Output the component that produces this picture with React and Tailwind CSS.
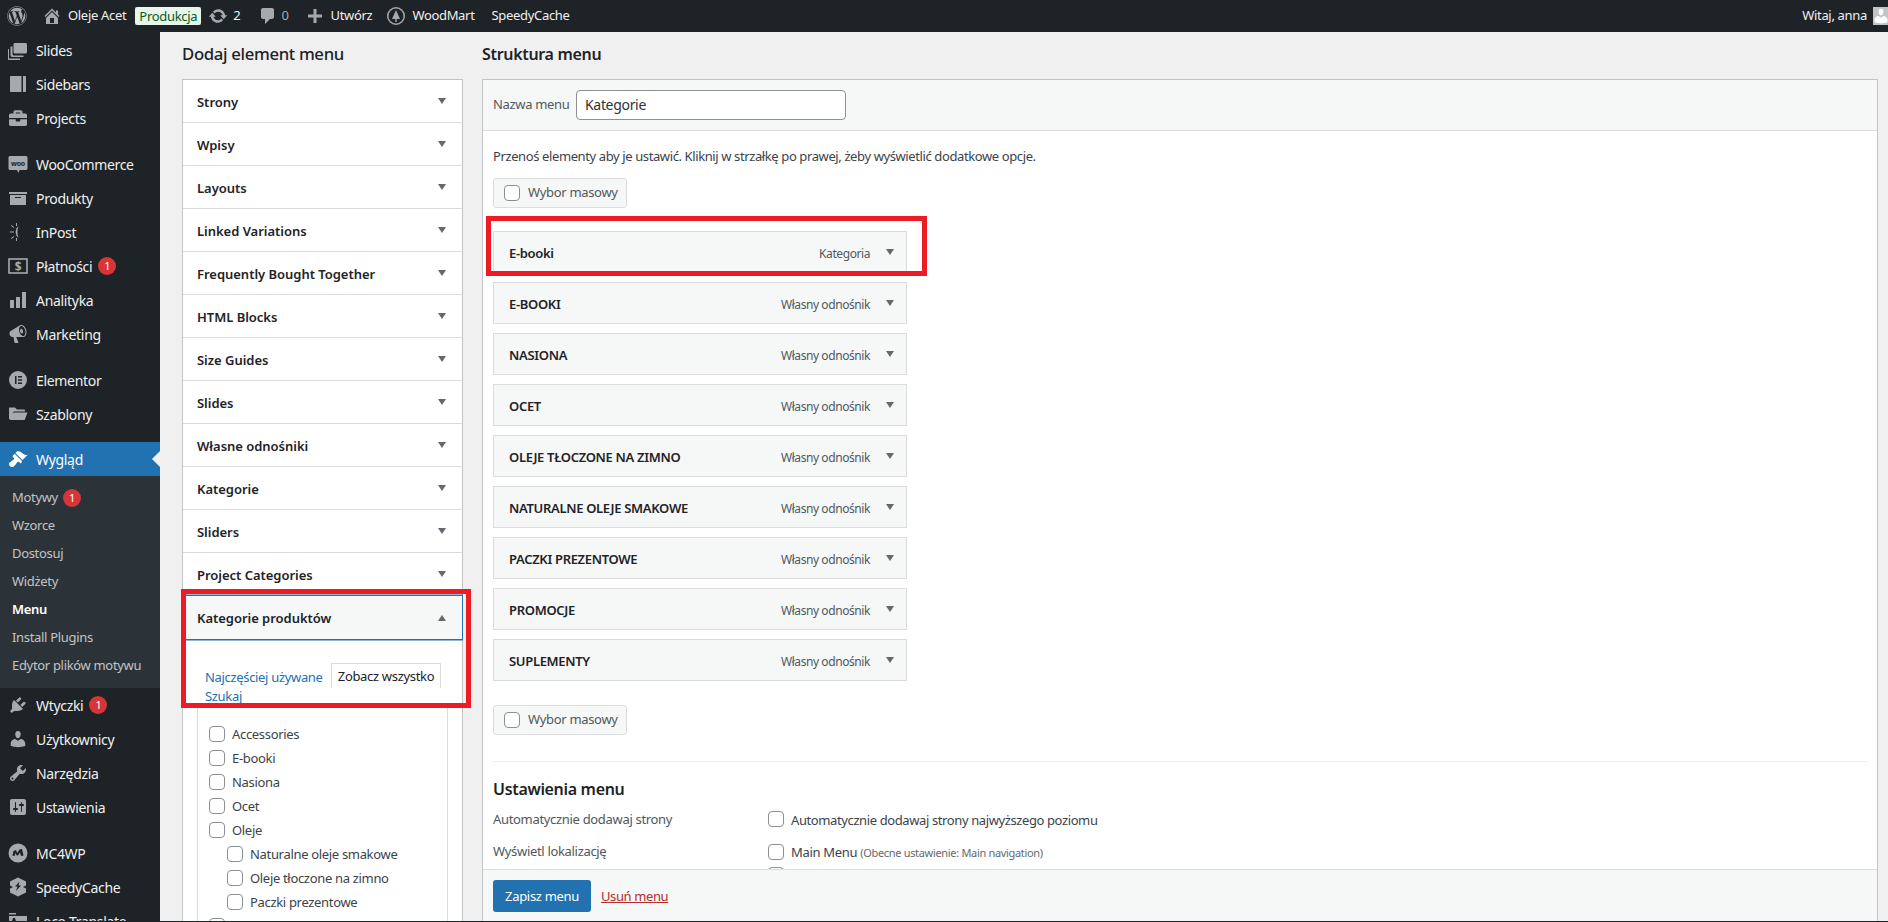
import React from "react";
import { FaWordpress, FaBriefcase } from "react-icons/fa";

const Ic = ({ d, size = 20, className = "", color = "#a7aaad" }) => (
  <svg width={size} height={size} viewBox="0 0 20 20" className={`shrink-0 ${className}`} fill={color}>
    <path d={d} />
  </svg>
);

const P = {
  home: "M16 8.5l1.53 1.53-1.06 1.06L10 4.62l-6.47 6.47-1.06-1.06L10 2.5l4 4v-2h2v4zm-6-2.46l6 5.99V18H4v-5.97zM12 17v-5H8v5h4z",
  update: "M10.2 3.28c3.53 0 6.43 2.61 6.92 6h2.08l-3.5 4-3.5-4h2.32c-.45-1.97-2.21-3.45-4.32-3.45-1.45 0-2.73.71-3.54 1.78L4.95 5.66C6.23 4.2 8.11 3.28 10.2 3.28zm-.4 13.44c-3.52 0-6.43-2.61-6.92-6H.8l3.5-4c1.17 1.33 2.33 2.67 3.5 4H5.48c.45 1.97 2.21 3.45 4.32 3.45 1.45 0 2.73-.71 3.54-1.78l1.71 1.95c-1.28 1.46-3.15 2.38-5.25 2.38z",
  comment: "M5 2h9c1.1 0 2 .9 2 2v7c0 1.1-.9 2-2 2h-2l-5 5v-5H5c-1.1 0-2-.9-2-2V4c0-1.1.9-2 2-2z",
  plus: "M8.5 3h3v5.5H17v3h-5.5V17h-3v-5.5H3v-3h5.5z",
  slides: "M7 3h10.5c.8 0 1.5.7 1.5 1.5V12c0 .8-.7 1.5-1.5 1.5H7c-.8 0-1.5-.7-1.5-1.5V4.500C5.500 3.700 6.200 3 7 3zM3 6.500h1.500V14c0 .8.700 1.500 1.500 1.500h9.500V17H4.500C3.200 17 2.500 16.300 2.500 15V7c0-.3.200-.5.500-.5zM1 9v9.500h11V20H1c-.6 0-1-.4-1-1V9z",
  sidebars: "M3 2h10.500v16H3c-.6 0-1-.4-1-1V3c0-.6.400-1 1-1zm12 0h2c.6 0 1 .4 1 1v14c0 .6-.4 1-1 1h-2z",
  archive: "M19 4v2H1V4h18zM2 7h16v10H2V7zm11 3V9H7v1h6z",
  bar: "M18 18V2h-4v16h4zm-6 0V7H8v11h4zm-6 0v-8H2v8h4z",
  mega: "M18.15 5.94c.46 1.62.38 3.22-.02 4.48-.42 1.28-1.26 2.18-2.3 2.48-.16.06-.26.06-.4.06-.06.02-.12.02-.18.02-.06.02-.14.02-.22.02h-6.8l2.22 5.5c.02.14-.06.26-.14.34-.08.1-.24.16-.34.16H6.95c-.1 0-.26-.06-.34-.16-.08-.08-.16-.2-.14-.34l-1-5.5H4.25l-.02-.02c-.5.06-1.08-.18-1.54-.62s-.88-1.08-1.06-1.88c-.24-.8-.2-1.56-.02-2.2.18-.62.58-1.08 1.06-1.3l.02-.02 9-5.4c.1-.06.18-.1.24-.16.06-.04.14-.08.24-.12.16-.08.28-.12.5-.18 1.04-.3 2.24.1 3.22.98.98.9 1.82 2.24 2.26 3.86zm-2.58 5.98h-.02c.4-.1.74-.34 1.04-.7.58-.7.86-1.76.86-3.04-.02-.64-.1-1.3-.28-1.98-.34-1.36-1.02-2.5-1.78-3.24s-1.68-1.1-2.46-.88c-.82.22-1.4.96-1.7 2-.32 1.04-.28 2.36.06 3.72.38 1.36 1 2.5 1.8 3.24.78.74 1.62 1.1 2.48.88zm-2.54-7.08c.22-.04.42-.02.62.04.38.16.76.48 1.02 1s.42 1.2.42 1.78c0 .3-.04.56-.12.8-.18.48-.44.84-.86.94-.34.1-.8-.06-1.14-.4-.34-.32-.62-.8-.8-1.36-.16-.56-.18-1.14-.06-1.6.14-.46.4-.8.8-.92.02-.02.08-.02.12-.04z",
  folder: "M1 3.500h6l2 2h7c.6 0 1 .4 1 1v1H6.500c-.6 0-1 .3-1.200.8L2.800 14.500 1 15.500V3.500zm5.800 5H19.500L16.700 16H1.800L4.900 9.200C5.200 8.700 6.200 8.500 6.800 8.500z",
  brush: "M14.48 11.06L7.41 3.99l1.5-1.5c.5-.56 2.3-.47 3.51.32 1.21.8 1.43 1.28 2.91 2.1 1.18.64 2.45 1.26 4.45.85zm-.71.71L6.7 4.7 4.93 6.47c-.39.39-.39 1.02 0 1.41l1.06 1.06c.39.39.39 1.03 0 1.42-.6.6-1.43 1.11-2.21 1.69-.35.26-.7.53-1.01.84C1.43 13.23 1 14.12 1 15c0 1.85 1.57 3 3 3 .88 0 1.77-.43 3.01-1.78.31-.31.58-.66.84-1.01.58-.78 1.09-1.61 1.69-2.21.39-.39 1.03-.39 1.42 0l1.06 1.06c.39.39 1.02.39 1.41 0z",
  plug: "M13.11 4.36L9.87 7.6 8 5.73l3.24-3.24c.35-.34 1.05-.2 1.56.32.52.51.66 1.21.31 1.55zm-8 1.77l.91-1.12 9.01 9.01-1.19.84c-.71.71-2.63 1.16-3.82 1.16H6.14L4.9 17.26c-.59.59-1.54.59-2.12 0-.59-.58-.59-1.53 0-2.12l1.24-1.24v-3.88c0-1.13.4-3.19 1.09-3.89zm7.26 3.97l3.24-3.24c.34-.35 1.04-.21 1.55.31.52.51.66 1.21.31 1.55l-3.24 3.25z",
  users: "M10 9.25c-2.27 0-2.73-3.44-2.73-3.44C7 4.02 7.82 2 9.97 2c2.16 0 2.98 2.02 2.71 3.81 0 0-.41 3.44-2.68 3.44zm0 2.57L12.72 10c2.39 0 4.52 2.33 4.52 4.53v2.49s-3.65 1.13-7.24 1.13c-3.65 0-7.24-1.13-7.24-1.13v-2.49c0-2.25 1.94-4.48 4.47-4.48z",
  tools: "M16.68 9.77c-1.34 1.34-3.3 1.67-4.95.99l-5.41 6.52c-.99.99-2.59.99-3.58 0s-.99-2.59 0-3.57l6.52-5.42c-.68-1.65-.35-3.61.99-4.95 1.28-1.28 3.12-1.62 4.72-1.06l-2.89 2.89 2.82 2.82 2.86-2.87c.53 1.58.18 3.39-1.08 4.65zM3.81 16.21c.4.39 1.04.39 1.43 0 .4-.4.4-1.04 0-1.43-.39-.4-1.03-.4-1.43 0-.39.39-.39 1.03 0 1.43z",
  settings: "M18 16V4c0-1.1-.9-2-2-2H4c-1.1 0-2 .9-2 2v12c0 1.1.9 2 2 2h12c1.1 0 2-.9 2-2zM8 11h1c.55 0 1 .45 1 1s-.45 1-1 1H8v1.5c0 .28-.22.5-.5.5s-.5-.22-.5-.5V13H6c-.55 0-1-.45-1-1s.45-1 1-1h1V5.500c0-.28.22-.5.5-.5s.5.22.5.5V11zm5-2h-1c-.55 0-1-.45-1-1s.45-1 1-1h1V5.500c0-.28.22-.5.5-.5s.5.22.5.5V7h1c.55 0 1 .45 1 1s-.45 1-1 1h-1v5.500c0 .28-.22.5-.5.5s-.5-.22-.5-.5V9z",
  elementor: "M10 1a9 9 0 1 0 0 18 9 9 0 0 0 0-18zM7 6h1.500v8H7zm3 0h4v1.500h-4zm0 3.200h4v1.500h-4zm0 3.300h4V14h-4z",
  mc: "M10 .5a9.500 9.500 0 1 0 0 19 9.500 9.500 0 0 0 0-19zM4.500 13l1-5 2.500-1 1.200 3 2.300-3.500 2.500-.5 1.500 6.500-2.500.5-1-3.500-2 3-1.500-.2-1.200-2.300-.500 2.700z",
  speedy: "M10 .5l8 4v4l-3 1.500 3 1.500v4l-8 4-8-4v-4l3-1.500-3-1.500v-4zm1.500 4L7 9.500h2.500L8 14l5-5.500h-2.500z",
  sun: "M10.500 4c-1.800 1.400-2.800 3.500-2.800 6s1 4.600 2.800 6c-.700-1.900-1.100-3.900-1.100-6s.4-4.100 1.100-6zM6 9.500H2v1h4zM6.300 5.300L3.500 2.900l-.6.700 2.800 2.400zM6.300 14.700l-.6-.7-2.800 2.400.6.700zM8 1h1v3H8zM8 16h1v3H8z",
  wood: "M10 1a9 9 0 1 0 0 18 9 9 0 0 0 0-18zm0 1.500a7.500 7.500 0 1 1 0 15 7.500 7.500 0 0 1 0-15zM10 4l4 9h-3.300v3H9.300v-3H6z",
  loco: "M1 2h7v1.500H1zM1 5h18v13H1zm4 2l-2.500 8h1.800l.5-1.800h2.400l.5 1.800h1.800L7 7z",
};

const Arrow = ({ up, className = "" }) => (
  <svg width="8" height="6" viewBox="0 0 8 6" className={`shrink-0 ${className}`} fill="#646970">
    <path d={up ? "M4 0l4 6H0z" : "M0 0h8L4 6z"} />
  </svg>
);

const Check = ({ className = "" }) => (
  <input type="checkbox" readOnly className={`appearance-none w-4 h-4 shrink-0 bg-white border border-[#8c8f94] rounded-[4px] ${className}`} />
);

const Badge = ({ className = "" }) => (
  <span className={`w-[18px] h-[18px] rounded-full bg-[#d63638] text-white text-[11px] leading-[18px] text-center ${className}`}>1</span>
);

const WooIcon = () => (
  <svg width="20" height="20" viewBox="0 0 20 20" className="shrink-0">
    <path d="M2 2h16c.8 0 1.500.7 1.500 1.500v11c0 .8-.7 1.500-1.500 1.500h-6.500l-1 3-1.500-3H2c-.8 0-1.500-.7-1.500-1.500v-11C.5 2.700 1.200 2 2 2z" fill="#a7aaad" />
    <text x="10" y="11.500" textAnchor="middle" fontSize="7" fontWeight="700" fill="#1d2327">woo</text>
  </svg>
);

const PayIcon = () => (
  <svg width="20" height="20" viewBox="0 0 20 20" className="shrink-0">
    <rect x="1" y="3" width="18" height="14" fill="none" stroke="#a7aaad" strokeWidth="1.600" />
    <text x="10" y="14.500" textAnchor="middle" fontSize="12" fontWeight="700" fill="#a7aaad">$</text>
  </svg>
);

const Item = ({ icon, label, badge, active }) => (
  <div className={`relative h-[34px] shrink-0 flex items-center pl-2 gap-2 text-[14px] ${active ? "bg-[#2271b1] text-white" : "text-[#f0f0f1]"}`}>
    {icon}
    <span className="whitespace-nowrap">{label}</span>
    {badge && <Badge className="-ml-0.5" />}
    {active && <span className="absolute right-0 top-[9px] border-y-8 border-r-8 border-y-transparent border-r-[#f0f0f1]" />}
  </div>
);

const SubItem = ({ label, badge, current }) => (
  <div className={`h-7 flex items-center pl-3 gap-[5px] text-[13px] ${current ? "text-white font-semibold" : "text-[#c3c4c7]"}`}>
    <span className="whitespace-nowrap">{label}</span>
    {badge && <Badge />}
  </div>
);

const Sidebar = () => (
  <aside className="w-40 shrink-0 bg-[#1d2327] overflow-hidden flex flex-col pt-px">
    <Item icon={<Ic d={P.slides} />} label="Slides" />
    <Item icon={<Ic d={P.sidebars} />} label="Sidebars" />
    <Item icon={<FaBriefcase size={18} color="#a7aaad" className="shrink-0 mx-px" />} label="Projects" />
    <div className="h-3 shrink-0" />
    <Item icon={<WooIcon />} label="WooCommerce" />
    <Item icon={<Ic d={P.archive} />} label="Produkty" />
    <Item icon={<Ic d={P.sun} />} label="InPost" />
    <Item icon={<PayIcon />} label="Płatności" badge />
    <Item icon={<Ic d={P.bar} />} label="Analityka" />
    <Item icon={<Ic d={P.mega} />} label="Marketing" />
    <div className="h-3 shrink-0" />
    <Item icon={<Ic d={P.elementor} />} label="Elementor" />
    <Item icon={<Ic d={P.folder} />} label="Szablony" />
    <div className="h-[11px] shrink-0" />
    <Item icon={<Ic d={P.brush} color="#ffffff" />} label="Wygląd" active />
    <div className="bg-[#2c3338] py-2 shrink-0">
      <SubItem label="Motywy" badge />
      <SubItem label="Wzorce" />
      <SubItem label="Dostosuj" />
      <SubItem label="Widżety" />
      <SubItem label="Menu" current />
      <SubItem label="Install Plugins" />
      <SubItem label="Edytor plików motywu" />
    </div>
    <Item icon={<Ic d={P.plug} />} label="Wtyczki" badge />
    <Item icon={<Ic d={P.users} />} label="Użytkownicy" />
    <Item icon={<Ic d={P.tools} />} label="Narzędzia" />
    <Item icon={<Ic d={P.settings} />} label="Ustawienia" />
    <div className="h-3 shrink-0" />
    <Item icon={<Ic d={P.mc} />} label="MC4WP" />
    <Item icon={<Ic d={P.speedy} />} label="SpeedyCache" />
    <Item icon={<Ic d={P.loco} />} label="Loco Translate" />
  </aside>
);

const TopBar = () => (
  <header className="h-8 shrink-0 bg-[#1d2327] flex items-center text-[13px] text-[#f0f0f1] whitespace-nowrap">
    <FaWordpress size={20} color="#a7aaad" className="ml-[7px] shrink-0" />
    <Ic d={P.home} size={20} className="ml-[15px]" />
    <span className="ml-[6px]">Oleje Acet</span>
    <span className="ml-[9px] w-[66px] text-center h-[18px] leading-[18px] bg-[#e8f5e9] text-[#0c5a1f] rounded-[2px]">Produkcja</span>
    <Ic d={P.update} size={20} className="ml-[7px]" />
    <span className="ml-[5px]">2</span>
    <Ic d={P.comment} size={20} className="ml-[18px]" />
    <span className="ml-[3px] text-[#a7aaad]">0</span>
    <Ic d={P.plus} size={20} className="ml-[16px]" />
    <span className="ml-[6px]">Utwórz</span>
    <Ic d={P.wood} size={20} className="ml-[14px]" />
    <span className="ml-[6px]">WoodMart</span>
    <span className="ml-[17px]">SpeedyCache</span>
    <span className="ml-auto mr-[6px]">Witaj, anna</span>
    <span className="w-[15px] h-[18px] bg-[#c3c4c7] overflow-hidden shrink-0 flex items-start">
      <Ic d={P.users} size={18} color="#ffffff" className="-ml-px" />
    </span>
  </header>
);

const accordion = [
  "Strony", "Wpisy", "Layouts", "Linked Variations", "Frequently Bought Together", "HTML Blocks",
  "Size Guides", "Slides", "Własne odnośniki", "Kategorie", "Sliders", "Project Categories",
];

const cats = [
  ["Accessories", 0], ["E-booki", 0], ["Nasiona", 0], ["Ocet", 0], ["Oleje", 0],
  ["Naturalne oleje smakowe", 1], ["Oleje tłoczone na zimno", 1], ["Paczki prezentowe", 1], ["Suplementy", 0],
];

const LeftColumn = () => (
  <section className="w-[281px] shrink-0 ml-[22px] flex flex-col overflow-hidden">
    <h2 className="mt-2.5 h-6 leading-6 text-[16.7px] font-medium text-[#1d2327] whitespace-nowrap">Dodaj element menu</h2>
    <div className="mt-[13px] bg-white border border-[#c3c4c7] border-b-0">
      {accordion.map((t) => (
        <div key={t} className="h-[43px] border-b border-[#dcdcde] flex items-center justify-between pl-[14px] pr-4 text-[13px] font-semibold text-[#1d2327] tracking-[-0.002em]">
          <span className="pt-[3px]">{t}</span>
          <Arrow />
        </div>
      ))}
      <div className="h-[43px] bg-[#f6f7f7] ring-[1.5px] ring-[#2271b1] flex items-center justify-between pl-[14px] pr-4 text-[13px] font-semibold text-[#1d2327] tracking-[-0.002em]">
        <span className="pt-[3px]">Kategorie produktów</span>
        <Arrow up />
      </div>
      <div className="pt-6 px-[14px]">
        <div className="pl-2 flex flex-wrap items-end w-[252px] text-[13px] text-[#2271b1]">
          <span className="w-[126px] h-[25px] leading-[29px] whitespace-nowrap tracking-[-0.025em]">Najczęściej używane</span>
          <span className="w-[110px] h-[25px] leading-[25px] text-center border border-b-0 border-[#dcdcde] text-[#1d2327] whitespace-nowrap">Zobacz wszystko</span>
          <span className="w-full h-[17px] leading-[17px]">Szukaj</span>
        </div>
        <div className="border border-[#dcdcde] px-[11px] pt-[16px] h-[300px]">
          {cats.map(([t, n]) => (
            <div key={t} className={`h-6 flex items-center gap-[7px] text-[13px] text-[#3c434a] ${n ? "pl-[18px]" : ""}`}>
              <Check />
              <span className="pt-[2px] whitespace-nowrap">{t}</span>
            </div>
          ))}
        </div>
      </div>
    </div>
  </section>
);

const items = [
  ["E-booki", "Kategoria"], ["E-BOOKI", "Własny odnośnik"], ["NASIONA", "Własny odnośnik"], ["OCET", "Własny odnośnik"],
  ["OLEJE TŁOCZONE NA ZIMNO", "Własny odnośnik"], ["NATURALNE OLEJE SMAKOWE", "Własny odnośnik"],
  ["PACZKI PREZENTOWE", "Własny odnośnik"], ["PROMOCJE", "Własny odnośnik"], ["SUPLEMENTY", "Własny odnośnik"],
];

const Bulk = ({ className = "" }) => (
  <div className={`w-[134px] h-[30px] flex items-center gap-2 pl-[10px] bg-[#f6f7f7] border border-[#dcdcde] rounded-[3px] text-[13px] text-[#50575e] ${className}`}>
    <Check />
    <span className="whitespace-nowrap">Wybor masowy</span>
  </div>
);

const RightColumn = () => (
  <section className="w-[1396px] shrink-0 ml-[19px] flex flex-col">
    <h2 className="mt-2.5 h-6 leading-6 text-[16px] font-semibold text-[#1d2327] whitespace-nowrap">Struktura menu</h2>
    <div className="mt-[13px] flex-1 min-h-0 flex flex-col bg-white border border-[#c3c4c7] border-b-0">
      <div className="h-[51px] shrink-0 bg-[#f6f7f7] border-b border-[#dcdcde] flex items-center pl-[10px] text-[13px] text-[#50575e]">
        <span className="w-[83px] whitespace-nowrap">Nazwa menu</span>
        <div className="w-[270px] h-[30px] bg-white border border-[#8c8f94] rounded-[4px] pl-2 leading-[28px] text-[14px] text-[#2c3338]">Kategorie</div>
      </div>
      <div className="flex-1 min-h-0 overflow-hidden pl-[10px]">
        <p className="mt-[15px] h-5 leading-5 text-[13px] text-[#3c434a] whitespace-nowrap tracking-[-0.03em]">Przenoś elementy aby je ustawić. Kliknij w strzałkę po prawej, żeby wyświetlić dodatkowe opcje.</p>
        <Bulk className="mt-3" />
        <div className="mt-[23px] flex flex-col gap-[9px] w-[414px]">
          {items.map(([t, k]) => (
            <div key={t} className="h-[42px] bg-[#f6f7f7] border border-[#dcdcde] flex items-center pl-[15px] pr-3 text-[13px]">
              <span className="pt-[3px] font-semibold text-[#1d2327] whitespace-nowrap">{t}</span>
              <span className="pt-[3px] ml-auto mr-4 text-[12px] text-[#50575e] whitespace-nowrap tracking-[-0.035em]">{k}</span>
              <Arrow />
            </div>
          ))}
        </div>
        <Bulk className="mt-6" />
        <div className="mt-[26px] mr-[10px] h-px bg-[#f0f0f1]" />
        <h3 className="mt-[16px] -mb-px h-[22px] leading-[22px] text-[16px] font-semibold text-[#1d2327]">Ustawienia menu</h3>
        <div className="grid grid-cols-[275px_1fr] text-[13px] text-[#50575e]">
          <div className="h-[37px] pt-[10px] leading-5">Automatycznie dodawaj strony</div>
          <div className="h-[37px] pt-3 flex items-start gap-[7px] text-[#3c434a]">
            <Check />
            <span className="leading-[18px] tracking-[-0.03em]">Automatycznie dodawaj strony najwyższego poziomu</span>
          </div>
          <div className="pt-[5px] leading-5">Wyświetl lokalizację</div>
          <div className="pt-2 text-[#3c434a]">
            <div className="h-[23px] flex items-start gap-[7px]">
              <Check />
              <span className="leading-4">Main Menu <span className="text-[11px] text-[#646970]">(Obecne ustawienie: Main navigation)</span></span>
            </div>
            <Check />
          </div>
        </div>
      </div>
      <div className="h-[52px] shrink-0 bg-[#f6f7f7] border-t border-[#dcdcde] pl-[10px] pt-[10px] flex items-start gap-[10px] text-[13px]">
        <div className="w-[98px] h-8 bg-[#2271b1] rounded-[3px] text-white text-center leading-8">Zapisz menu</div>
        <span className="leading-8 text-[#b32d2e] underline tracking-[-0.03em]">Usuń menu</span>
      </div>
    </div>
  </section>
);

export default function App() {
  return (
    <div className="relative w-[1888px] h-[922px] overflow-hidden flex flex-col bg-[#f0f0f1] font-['Noto_Sans',sans-serif] tracking-[-0.02em]">
      <TopBar />
      <div className="flex-1 min-h-0 flex">
        <Sidebar />
        <LeftColumn />
        <RightColumn />
      </div>
      <div className="h-px shrink-0 bg-[#1d2327]" />
      <div className="absolute left-[181px] top-[589px] w-[290px] h-[119px] border-[5px] border-[#ed1c24] pointer-events-none" />
      <div className="absolute left-[486px] top-[216px] w-[441px] h-[60px] border-[5px] border-[#ed1c24] pointer-events-none" />
    </div>
  );
}
